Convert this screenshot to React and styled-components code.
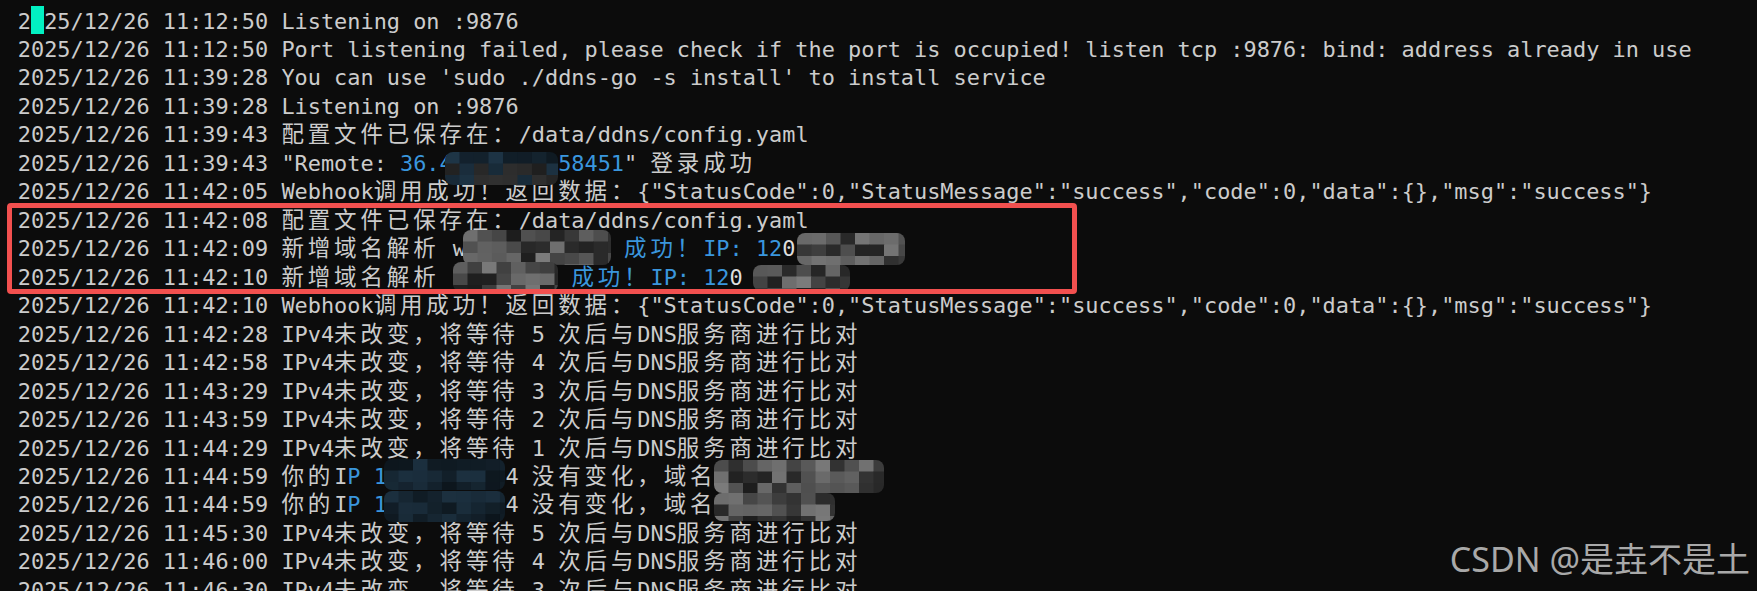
import React from 'react';
import styled, { createGlobalStyle } from 'styled-components';

const CELL = 13.18;
const LINE = 28.47;
const CJK_SIZE = 22.5;

const Global = createGlobalStyle`
  html, body { margin: 0; padding: 0; background: #0c0c0c; }
  body { overflow: hidden; }
`;

const Terminal = styled.div`
  position: relative;
  height: 591px;
  overflow: hidden;
  box-sizing: border-box;
  padding: 7.5px 0 0 17.8px;
  background: #0c0c0c;
  color: #cccccc;
  font-family: "DejaVu Sans Mono", "Liberation Mono", monospace;
  font-size: 21.9px;
`;

const Line = styled.div`
  height: ${LINE}px;
  line-height: ${LINE}px;
  white-space: pre;
`;

const Wide = styled.span`
  font-family: "Noto Sans CJK SC", "Noto Sans CJK JP", sans-serif;
  font-size: ${CJK_SIZE}px;
  line-height: 1;
  letter-spacing: ${CELL * 2 - CJK_SIZE}px;
`;

const Blue = styled.span`
  color: #3a96dd;
`;

const Bright = styled.span`
  color: #dedede;
`;

const Cursor = styled.span`
  display: inline-block;
  vertical-align: top;
  width: ${CELL}px;
  height: 28.3px;
  margin-top: -1.5px;
  background: #02f0c2;
  color: #02f0c2;
`;

const Highlight = styled.div`
  position: relative;
  &::after {
    content: '';
    position: absolute;
    left: -10.8px;
    top: -3.8px;
    width: 1070px;
    height: 91px;
    box-sizing: border-box;
    border: 5px solid #f2504f;
    border-radius: 4px;
    pointer-events: none;
  }
`;

const MosaicBox = styled.span`
  display: inline-block;
  vertical-align: top;
  width: ${(p) => p.$w}px;
  height: ${(p) => p.$h}px;
  margin-top: ${(p) => p.$dy}px;
  margin-left: ${(p) => p.$ml}px;
  border-radius: 8px;
  overflow: hidden;
  filter: blur(0.7px);
  & > svg { display: block; }
`;

const Watermark = styled.div`
  position: absolute;
  right: 7px;
  top: 542px;
  font-family: "Noto Sans", "Noto Sans CJK SC", sans-serif;
  font-size: 34px;
  line-height: 34px;
  color: #a9a9a9;
  white-space: nowrap;
`;

const WIDE = /[\u1100-\u115F\u2E80-\uA4CF\uAC00-\uD7A3\uF900-\uFAFF\uFE30-\uFE4F\uFF00-\uFF60\uFFE0-\uFFE6]/;

function Text({ children }) {
  const out = [];
  let cur = '';
  let curWide = null;
  for (const ch of children) {
    const w = WIDE.test(ch);
    if (curWide === null || w === curWide) {
      cur += ch;
      curWide = w;
    } else {
      out.push([curWide, cur]);
      cur = ch;
      curWide = w;
    }
  }
  if (cur) out.push([curWide, cur]);
  return (
    <>
      {out.map(([w, s], i) => (w ? <Wide key={i}>{s}</Wide> : <React.Fragment key={i}>{s}</React.Fragment>))}
    </>
  );
}

function rng(seed) {
  let s = seed * 7919 + 13;
  return () => {
    s = (s * 9301 + 49297) % 233280;
    return s / 233280;
  };
}

function cellColor(tone, v, row) {
  if (tone === 'blue') {
    const k = 0.55 + v * 0.75;
    return `rgb(${Math.round(22 * k)},${Math.round(38 * k)},${Math.round(50 * k)})`;
  }
  if (tone === 'mixed') {
    if (row === 0 || v > 0.45) {
      const k = 0.6 + v * 0.7;
      return `rgb(${Math.round(24 * k)},${Math.round(42 * k)},${Math.round(56 * k)})`;
    }
    const g = Math.round(30 + v * 40);
    return `rgb(${g},${g},${g})`;
  }
  const g = Math.round(28 + v * 95);
  return `rgb(${g},${g},${g})`;
}

function Mosaic({ w, h, dy = 0, ml = 0, tone = 'gray', seed = 1 }) {
  const cw = 14.5;
  const chh = 11.5;
  const cols = Math.ceil(w / cw);
  const rows = Math.ceil(h / chh);
  const r = rng(seed);
  const rects = [];
  for (let y = 0; y < rows; y++) {
    for (let x = 0; x < cols; x++) {
      rects.push(
        <rect
          key={`${x}-${y}`}
          x={x * cw}
          y={y * chh}
          width={cw + 0.5}
          height={chh + 0.5}
          fill={cellColor(tone, r(), y)}
        />
      );
    }
  }
  return (
    <MosaicBox $w={w} $h={h} $dy={dy} $ml={ml}>
      <svg width={w} height={h} viewBox={`0 0 ${w} ${h}`}>
        {rects}
      </svg>
    </MosaicBox>
  );
}

const WAIT = (t, n) => `2025/12/26 ${t} IPv4未改变，将等待 ${n} 次后与DNS服务商进行比对`;
const HOOK = (t) =>
  `2025/12/26 ${t} Webhook调用成功！返回数据：{"StatusCode":0,"StatusMessage":"success","code":0,"data":{},"msg":"success"}`;

export default function App() {
  return (
    <>
      <Global />
      <Terminal>
        <Line>
          2<Cursor>0</Cursor>25/12/26 11:12:50 Listening on :9876
        </Line>
        <Line>
          2025/12/26 11:12:50 Port listening failed, please check if the port is occupied! listen tcp :9876: bind: address already in use
        </Line>
        <Line>2025/12/26 11:39:28 You can use 'sudo ./ddns-go -s install' to install service</Line>
        <Line>2025/12/26 11:39:28 Listening on :9876</Line>
        <Line>
          <Text>2025/12/26 11:39:43 配置文件已保存在：/data/ddns/config.yaml</Text>
        </Line>
        <Line>
          {'2025/12/26 11:39:43 "Remote: '}
          <Blue>36.4</Blue>
          <Mosaic w={8 * CELL + 7.7} ml={-7.7} h={33} dy={2.5} tone="mixed" seed={3} />
          <Blue>58451</Blue>
          <Text>{'" 登录成功'}</Text>
        </Line>
        <Line>
          <Text>{HOOK('11:42:05')}</Text>
        </Line>
        <Highlight>
          <Line>
            <Text>2025/12/26 11:42:08 配置文件已保存在：/data/ddns/config.yaml</Text>
          </Line>
          <Line>
            <Text>2025/12/26 11:42:09 新增域名解析 w</Text>
            <Mosaic w={11 * CELL + 3} ml={-3} h={35} dy={-5.3} seed={7} />
            {' '}
            <Blue>
              <Text>成功！IP: 12</Text>
            </Blue>
            <Bright>0</Bright>
            <Mosaic w={108} ml={1.5} h={32} dy={-2} seed={11} />
          </Line>
          <Line>
            <Text>{'2025/12/26 11:42:10 新增域名解析 '}</Text>
            <Mosaic w={8 * CELL} h={30} dy={-2} seed={19} />
            {' '}
            <Blue>
              <Text>成功！IP: 12</Text>
            </Blue>
            <Bright>0</Bright>
            <Mosaic w={97} ml={10} h={26} dy={1.3} seed={23} />
          </Line>
        </Highlight>
        <Line>
          <Text>{HOOK('11:42:10')}</Text>
        </Line>
        <Line>
          <Text>{WAIT('11:42:28', 5)}</Text>
        </Line>
        <Line>
          <Text>{WAIT('11:42:58', 4)}</Text>
        </Line>
        <Line>
          <Text>{WAIT('11:43:29', 3)}</Text>
        </Line>
        <Line>
          <Text>{WAIT('11:43:59', 2)}</Text>
        </Line>
        <Line>
          <Text>{WAIT('11:44:29', 1)}</Text>
        </Line>
        <Line>
          <Text>2025/12/26 11:44:59 你的I</Text>
          <Blue>P 1</Blue>
          <Mosaic w={9 * CELL + 3} ml={-3} h={31} dy={-4} tone="blue" seed={29} />
          <Text>4 没有变化，域名</Text>
          <Mosaic w={170} ml={-2} h={33} dy={-3} seed={31} />
        </Line>
        <Line>
          <Text>2025/12/26 11:44:59 你的I</Text>
          <Blue>P 1</Blue>
          <Mosaic w={9 * CELL + 3} ml={-3} h={31} dy={-0.5} tone="blue" seed={37} />
          <Text>4 没有变化，域名</Text>
          <Mosaic w={121} ml={-2} h={28} dy={1.5} seed={41} />
        </Line>
        <Line>
          <Text>{WAIT('11:45:30', 5)}</Text>
        </Line>
        <Line>
          <Text>{WAIT('11:46:00', 4)}</Text>
        </Line>
        <Line>
          <Text>{WAIT('11:46:30', 3)}</Text>
        </Line>
        <Watermark>CSDN @是垚不是土</Watermark>
      </Terminal>
    </>
  );
}
